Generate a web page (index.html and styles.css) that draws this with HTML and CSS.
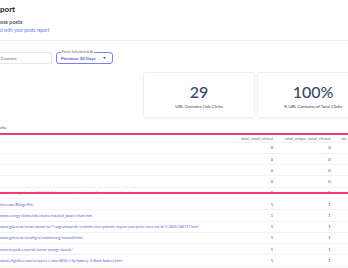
FILE: index.html
```html
<!DOCTYPE html>
<html lang="en">
<head>
<meta charset="utf-8">
<title>Posts report</title>
<link rel="stylesheet" href="styles.css">
</head>
<body>
<main class="page">
  <header class="page-head">
    <h1 class="title">port</h1>
    <h2 class="subtitle">oss posts</h2>
    <p class="desc">d with your posts report</p>
  </header>

  <div class="filters">
    <div class="input">Contains</div>
    <div class="select">
      <span class="select-label">Posts Scheduled At</span>
      <span class="select-value">Previous 30 Days</span>
      <svg class="caret" viewBox="0 0 4 3"><path d="M0 0h4L2 2.6z"/></svg>
    </div>
  </div>

  <section class="cards">
    <div class="card">
      <div class="num">29</div>
      <div class="label">URL Contains Link Clicks</div>
    </div>
    <div class="card">
      <div class="num">100%</div>
      <div class="label">% URL Contains of Total Clicks</div>
    </div>
  </section>

  <div class="tab">cks</div>

  <div class="table">
    <div class="row head">
      <div></div>
      <div class="cell num-cell"><span class="sort">-</span> total_email_clicked</div>
      <div class="cell num-cell"><span class="sort">-</span> total_unique_email_clicked</div>
      <div class="cell last"><span class="sort">-</span> tot</div>
    </div>
    <div class="row"><div></div><div class="cell num-cell">0</div><div class="cell num-cell">0</div><div></div></div>
    <div class="row"><div></div><div class="cell num-cell">0</div><div class="cell num-cell">0</div><div></div></div>
    <div class="row"><div></div><div class="cell num-cell">0</div><div class="cell num-cell">0</div><div></div></div>
    <div class="row"><div></div><div class="cell num-cell">0</div><div class="cell num-cell">0</div><div></div></div>
    <div class="row cut"><div class="cell link faint">www.pv-magazine.de/2024/05/14/neuer-heimspeicher-mit-lfp-batterie-test.html</div><div class="cell num-cell">1</div><div class="cell num-cell">1</div><div></div></div>
    <div class="row"><div class="cell link">itter.com/BiilagerPro</div><div class="cell num-cell">1</div><div class="cell num-cell">1</div><div></div></div>
    <div class="row"><div class="cell link">www.energy-charts.info/charts/installed_power/chart.htm</div><div class="cell num-cell">1</div><div class="cell num-cell">1</div><div></div></div>
    <div class="row"><div class="cell link">www.golem.de/news/xiaomi-su-7-angeschaut-die-technik-eines-porsche-taycan-zum-preis-eines-vw-id-3-2405-184757.html</div><div class="cell num-cell">1</div><div class="cell num-cell">1</div><div></div></div>
    <div class="row"><div class="cell link">www.golem.de/sonstiges/zustimmung/auswahl.html</div><div class="cell num-cell">1</div><div class="cell num-cell">1</div><div></div></div>
    <div class="row"><div class="cell link">www.heymiles.com/de/micro-storage-launch/</div><div class="cell num-cell">1</div><div class="cell num-cell">1</div><div></div></div>
    <div class="row"><div class="cell link">www.elfgridtec.com/en/pytes-e-box-4850-c-lfp-battery-2-4kwh-battery.html</div><div class="cell num-cell">1</div><div class="cell num-cell">1</div><div></div></div>
  </div>
</main>
</body>
</html>
```

FILE: styles.css
```css
* { box-sizing: border-box; margin: 0; padding: 0; }

html, body {
  width: 348px;
  height: 268px;
  overflow: hidden;
  background: #ffffff;
}

body {
  font-family: Lato, "Noto Sans", sans-serif;
  color: #374151;
}

.page-head {
  height: 41px;
  padding-top: 5.1px;
  border-bottom: 1px solid #eff0f4;
}

.title {
  font-size: 8px;
  line-height: 9px;
  font-weight: 700;
  color: #111827;
}

.subtitle {
  margin-top: 4.8px;
  font-size: 5.5px;
  line-height: 6px;
  font-weight: 600;
  color: #374151;
}

.desc {
  margin-top: 3.3px;
  font-size: 4.7px;
  line-height: 5px;
  color: #6e78f0;
}

.filters {
  display: flex;
  gap: 4px;
  margin-top: 11px;
  height: 12px;
}

.input {
  width: 52px;
  border: 1px solid #e5e7eb;
  border-left: none;
  border-radius: 0 3px 3px 0;
  display: flex;
  align-items: center;
  padding-left: 0.5px;
  font-size: 4.2px;
  color: #6b7280;
}

.select {
  position: relative;
  width: 57px;
  border: 1px solid #7b80f0;
  border-radius: 3px;
  display: flex;
  align-items: center;
  padding: 0 6px 0 4px;
}

.select-label {
  position: absolute;
  left: 3.5px;
  top: -3px;
  padding: 0 1px;
  background: #ffffff;
  font-size: 3.8px;
  line-height: 4px;
  color: #6b7280;
}

.select-value {
  font-size: 4.5px;
  font-weight: 600;
  color: #4338ca;
}

.caret {
  margin-left: auto;
  width: 3px;
  height: 2.2px;
  fill: #4f46e5;
}

.cards {
  display: flex;
  gap: 2px;
  padding-left: 143px;
  margin-top: 8px;
}

.card {
  flex: 0 0 112px;
  height: 46px;
  border: 1px solid #eef0f3;
  border-radius: 3px;
  box-shadow: 0 1px 2px rgba(17, 24, 39, 0.06);
  display: flex;
  flex-direction: column;
  align-items: center;
  padding-top: 10.8px;
}

.num {
  font-size: 16px;
  line-height: 16px;
  font-weight: 500;
  color: #3b4768;
}

.label {
  margin-top: 3.8px;
  font-size: 4.4px;
  line-height: 5px;
  color: #374151;
}

.tab {
  margin-top: 7px;
  font-size: 4.4px;
  line-height: 5px;
  color: #4b5563;
}

.table {
  margin-top: 2.7px;
  border-top: 2px solid #eb3d6f;
}

.row {
  display: grid;
  grid-template-columns: 218px 57px 57.5px 1fr;
  align-items: center;
  height: 11.27px;
  border-bottom: 1px solid #f1f2f5;
  font-size: 4px;
  line-height: 5px;
  color: #374151;
}

.row.head {
  height: 8px;
  font-size: 3.9px;
  color: #6b7280;
}

.cell { white-space: nowrap; }

.num-cell {
  text-align: right;
  padding-right: 2px;
}

.last { padding-left: 6px; }

.sort {
  color: #b4b8c2;
  margin-right: 0.5px;
}

.link {
  font-size: 3.6px;
  color: #5d62d8;
}

.faint { color: #a9acee; }

.row.cut { position: relative; }

.row.cut::after {
  content: "";
  position: absolute;
  left: 0;
  right: 0;
  top: 4.6px;
  height: 2px;
  background: #eb3d6f;
}
```
